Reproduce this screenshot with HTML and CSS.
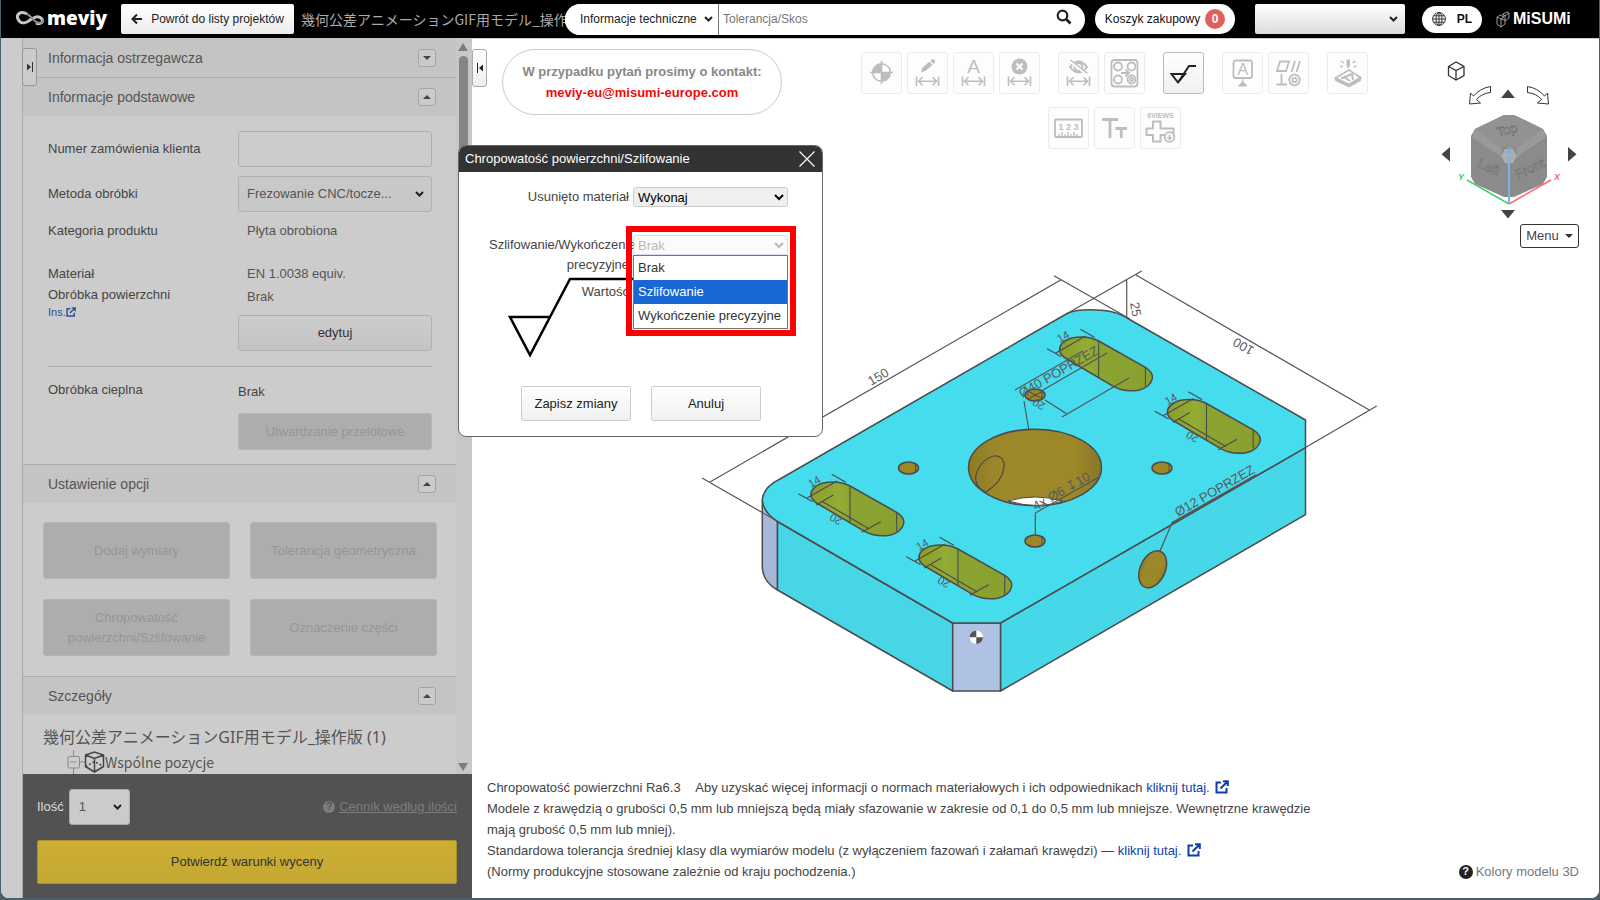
FILE: index.html
```html
<!DOCTYPE html>
<html lang="pl">
<head>
<meta charset="utf-8">
<title>meviy</title>
<link rel="stylesheet" href="styles.css">
</head>
<body>
<svg class="defs" aria-hidden="true">
  <defs>
    <symbol id="i-ext" viewBox="0 0 14 14"><path d="M6 2.5H1.5V12.500H11.500V8M8 1.200H12.800V6M12.300 1.700L5.500 8.500" fill="none" stroke="currentColor" stroke-width="2"/></symbol>
    <symbol id="i-dim" viewBox="0 0 41 42"><path d="M9.500 24.500v9.500M31.500 24.500v9.500M11 29.200h19M15.500 25.200l-4 4 4 4M25.500 25.200l4 4-4 4" fill="none" stroke="currentColor" stroke-width="1.600"/></symbol>
    <linearGradient id="g-slot" x1="0" x2="1"><stop offset="0" stop-color="#8a9f2c"/><stop offset=".3" stop-color="#92ac35"/><stop offset=".44" stop-color="#8aa432"/><stop offset=".45" stop-color="#8aa331"/><stop offset="1" stop-color="#87a02f"/></linearGradient>
    <linearGradient id="g-bore" x1="0" x2="1"><stop offset="0" stop-color="#8d7a25"/><stop offset=".2" stop-color="#9c8828"/><stop offset=".8" stop-color="#9c8828"/><stop offset="1" stop-color="#87762a"/></linearGradient>
  </defs>
</svg>
<div class="window">
  <header class="topbar">
    <a class="brand" href="#" aria-label="meviy">
      <svg viewBox="0 0 30 18" width="30" height="18"><path d="M11 4C4 0 0 5 2 9c2 5 8 5 12 1 4-3 9-5 12-1 2 3-2 6-6 4" fill="none" stroke="#c9c5cc" stroke-width="3"/><path d="M11 4c4 2 5 5 9 8 4 2 8 0 7-3" fill="none" stroke="#8f8b93" stroke-width="2"/></svg>
      <span>meviy</span>
    </a>
    <button class="back"><svg viewBox="0 0 12 12" width="12" height="12"><path d="M11 6H2M6 1.500L1.500 6 6 10.500" fill="none" stroke="#222" stroke-width="2"/></svg>Powrót do listy projektów</button>
    <span class="project">幾何公差アニメーションGIF用モデル_操作版</span>
    <form class="search">
      <select class="pick" aria-label="Zakres"><option>Informacje techniczne</option></select>
      <input type="text" placeholder="Tolerancja/Skos" aria-label="Szukaj">
      <button type="button" aria-label="Szukaj"><svg viewBox="0 0 16 16" width="16" height="16"><circle cx="6.500" cy="6.500" r="4.800" fill="none" stroke="#222" stroke-width="2.200"/><path d="M10 10l4.500 4.500" stroke="#222" stroke-width="2.800"/></svg></button>
    </form>
    <button class="cart">Koszyk zakupowy <b>0</b></button>
    <select class="account pick" aria-label="Konto"><option></option></select>
    <button class="lang"><svg viewBox="0 0 14 14" width="14" height="14"><g fill="none" stroke="#333"><circle cx="7" cy="7" r="6.400"/><ellipse cx="7" cy="7" rx="3" ry="6.400"/><path d="M7 .6v12.800M.6 7h12.800M1.500 3.800h11M1.500 10.200h11"/></g></svg>PL</button>
    <a class="misumi" href="#" aria-label="MISUMI"><svg viewBox="0 0 14 17" width="14" height="17"><path d="M1 6l4 2v8L1 13zM5 8l3-2M5 16l4-3V9L5 8M1 6l3-2 4 2M7 3l4-2 2 1-4 3zM9 5v5l4-3V2M7 3v3" fill="none" stroke="#aaa" stroke-width=".9"/></svg><span>MiSUMi</span></a>
  </header>

  <main class="main">
    <div class="gutter"></div>
    <aside class="sidebar">
      <button class="tab tab-left" aria-label="Rozwiń"><svg viewBox="0 0 8 10" width="8" height="10"><path d="M1 1.500v7L5 5z" fill="#333"/><path d="M6.500 0v10" stroke="#333"/></svg></button>
      <div class="scroll">
        <div class="panel">
          <h2 class="sec">Informacja ostrzegawcza<button class="toggle" aria-label="Rozwiń"><svg viewBox="0 0 8 4" width="8" height="4"><path d="M0 0h8L4 4z"/></svg></button></h2>
          <h2 class="sec">Informacje podstawowe<button class="toggle" aria-label="Zwiń"><svg viewBox="0 0 8 4" width="8" height="4"><path d="M0 4h8L4 0z"/></svg></button></h2>
          <div class="info">
            <div class="row tall"><label for="order">Numer zamówienia klienta</label><input id="order" class="box" type="text"></div>
            <div class="row tall"><label for="method">Metoda obróbki</label><select id="method" class="box pick"><option>Frezowanie CNC/tocze...</option></select></div>
            <div class="row"><span>Kategoria produktu</span><span class="val">Płyta obrobiona</span></div>
            <div class="row material"><span>Materiał</span><span class="val">EN 1.0038 equiv.</span></div>
            <div class="row">
              <div>Obróbka powierzchni<a class="ins" href="#">Ins.<svg width="10" height="10"><use href="#i-ext"/></svg></a></div>
              <div class="stack"><span class="val">Brak</span><button class="box edit">edytuj</button></div>
            </div>
            <hr>
            <div class="row">
              <span>Obróbka cieplna</span>
              <div class="stack heat"><span>Brak</span><button class="off">Utwardzanie przelotowe</button></div>
            </div>
          </div>
          <h2 class="sec">Ustawienie opcji<button class="toggle" aria-label="Zwiń"><svg viewBox="0 0 8 4" width="8" height="4"><path d="M0 4h8L4 0z"/></svg></button></h2>
          <div class="options">
            <button class="off">Dodaj wymiary</button>
            <button class="off">Tolerancja geometryczna</button>
            <button class="off">Chropowatość powierzchni/Szlifowanie</button>
            <button class="off">Oznaczenie części</button>
          </div>
          <h2 class="sec">Szczegóły<button class="toggle" aria-label="Zwiń"><svg viewBox="0 0 8 4" width="8" height="4"><path d="M0 4h8L4 0z"/></svg></button></h2>
          <div class="details">
            <p class="model-name">幾何公差アニメーションGIF用モデル_操作版 (1)</p>
            <p class="tree"><svg viewBox="0 0 38 24" width="38" height="24"><g fill="none" stroke="#8a8a8a"><path d="M6.500 0v6M6.500 18v6M12.500 12h6"/><rect x="1" y="6.500" width="11.500" height="11.500" rx="1.500"/><path d="M3.500 12h6"/></g><g fill="none" stroke="#444" stroke-width="1.500"><path d="M18.500 5L27.500 2 36.500 5v11.500L27.500 22 18.500 16.500zM18.500 5l9 3.500 9-3.500M27.500 8.500V22"/><path d="M18.500 16.500l9-5 9 5" stroke-dasharray="2 2"/></g></svg>Wspólne pozycje</p>
          </div>
        </div>
        <div class="scrollbar" aria-hidden="true"><svg viewBox="0 0 10 8" width="10" height="8"><path d="M0 8L5 0l5 8z" fill="#7d7d7d"/></svg><i></i><svg viewBox="0 0 10 8" width="10" height="8"><path d="M0 0h10L5 8z" fill="#7d7d7d"/></svg></div>
      </div>
      <div class="quote">
        <div class="qty"><label for="qty">Ilość</label><select id="qty" class="pick"><option>1</option></select>
          <a href="#"><span class="q">?</span><u>Cennik według ilości</u></a></div>
        <button class="confirm">Potwierdź warunki wyceny</button>
      </div>
    </aside>

    <section class="viewer">
      <div class="viewer-top">
        <button class="tab" aria-label="Zwiń"><svg viewBox="0 0 8 10" width="8" height="10"><path d="M7 1.500v7L3 5z" fill="#222"/><path d="M1.500 0v10" stroke="#222"/></svg></button>
        <p class="contact">W przypadku pytań prosimy o kontakt:<a href="#">meviy-eu@misumi-europe.com</a></p>
        <div class="tools">
          <div class="tool-row">
            <button aria-label="Punkt odniesienia"><svg viewBox="0 0 41 42"><circle cx="20.500" cy="20.500" r="8.800" fill="none" stroke="currentColor" stroke-width="1.600"/><path d="M20.500 20.500v-9a9 9 0 0 0-9 9zM20.500 20.500v9a9 9 0 0 0 9-9z" fill="currentColor"/><path d="M20.500 9v23M9 20.500h23" stroke="currentColor" stroke-width="1.600"/></svg></button>
            <button aria-label="Edytuj wymiar"><svg viewBox="0 0 41 42"><use href="#i-dim"/><path d="M14 20.500l1.300-4.700 7.200-6.300 3 3.400-7.200 6.200zM23.500 8.700l1.500-1.400q1.200-.6 2.200.4l.8 1q.7 1-.3 1.900l-1.400 1.300z" fill="currentColor"/></svg></button>
            <button aria-label="Tekst wymiaru"><svg viewBox="0 0 41 42"><use href="#i-dim"/><text x="20.500" y="20.500" class="ic" font-size="19">A</text></svg></button>
            <button aria-label="Usuń wymiar"><svg viewBox="0 0 41 42"><use href="#i-dim"/><circle cx="20.500" cy="14.500" r="8" fill="currentColor"/><path d="M17.500 11.500l6 6M23.500 11.500l-6 6" stroke="#fff" stroke-width="2"/></svg></button>
            <button class="gap" aria-label="Ukryj wymiar"><svg viewBox="0 0 41 42"><use href="#i-dim"/><path d="M12 15q8.500-11 17 0-8.500 11-17 0z" fill="none" stroke="currentColor" stroke-width="2"/><circle cx="20.500" cy="15" r="4" fill="none" stroke="currentColor" stroke-width="2"/><path d="M11.500 8.500l17.500 13.500" stroke="#fff" stroke-width="3"/><path d="M12.500 8l17 13.500" stroke="currentColor" stroke-width="1.500"/></svg></button>
            <button aria-label="Grupa otworów"><svg viewBox="0 0 41 42"><g fill="none" stroke="currentColor" stroke-width="1.800"><rect x="7.500" y="8" width="26" height="26.500" rx="3"/><circle cx="14" cy="14.500" r="4"/><circle cx="27.500" cy="14.500" r="4"/><circle cx="14" cy="27.500" r="4"/><circle cx="27.500" cy="27.500" r="4"/><circle cx="27.500" cy="27.500" r="1.500"/><path d="M17 21h7M21.500 17.500l3.500 3.500-3.500 3.500"/></g></svg></button>
            <button class="gap on" aria-label="Chropowatość"><svg viewBox="0 0 41 42"><path d="M8.500 22h13.500L15 30.500zM15 30.500L26 14h7" fill="none" stroke="currentColor" stroke-width="2"/></svg></button>
            <button class="gap" aria-label="Oznaczenie"><svg viewBox="0 0 41 42"><rect x="11.500" y="8.500" width="18.500" height="17.500" rx="2" fill="none" stroke="currentColor" stroke-width="1.800"/><text x="20.750" y="23" class="ic" font-size="16">A</text><path d="M20.750 26v5M16.500 34h8.500l-4.200-4.500z" stroke="currentColor" fill="currentColor"/></svg></button>
            <button aria-label="Tolerancja"><svg viewBox="0 0 41 42"><g fill="none" stroke="currentColor" stroke-width="1.800"><path d="M12 9.500h9l-3 9.500H9zM27 9l-3.500 11M32 9l-3.500 11M13.500 22v10.500M8.500 32.500h10.500"/><circle cx="26.500" cy="28" r="5.300"/><circle cx="26.500" cy="28" r="2.200"/></g></svg></button>
            <button class="gap" aria-label="Grawerowanie"><svg viewBox="0 0 41 42"><path d="M8.500 26L22 18l11.500 7.500L22 32.500z" fill="none" stroke="currentColor" stroke-width="1.600"/><path d="M8.500 26v2.500l13.500 6.500 11.500-6.500V25.500L22 32.500z" fill="currentColor" stroke="currentColor"/><path d="M14 26.500l11-4.500 1 6M17 25l6 4" fill="none" stroke="currentColor" stroke-width="2"/><path d="M19.500 7.500h3.500v6l-1.750 3-1.750-3z" fill="currentColor"/><path d="M14 9l3 2M13 14.500h3M28.500 9l-3 2M29.500 14.500h-3" stroke="currentColor" stroke-width="1.500"/></svg></button>
          </div>
          <div class="tool-row">
            <button aria-label="Linijka"><svg viewBox="0 0 41 42"><rect x="7" y="12.500" width="27" height="17.500" rx="1" fill="none" stroke="currentColor" stroke-width="1.800"/><text x="20.500" y="23" class="ic" font-size="9" font-weight="700">1 2 3</text><path d="M11 30v-3M14 30v-5M17 30v-3M20 30v-5M23 30v-3M26 30v-5M29 30v-3" stroke="currentColor" stroke-width="1.400"/></svg></button>
            <button aria-label="Rozmiar tekstu"><svg viewBox="0 0 41 42"><path d="M8 12.500h16M16 12.500V31M21.500 21.500h11.500M27.250 21.500V31" fill="none" stroke="currentColor" stroke-width="2.800"/></svg></button>
            <button aria-label="6 widoków"><svg viewBox="0 0 41 42"><text x="20.500" y="10.500" class="ic" font-size="7" font-weight="700">6VIEWS</text><path d="M13 14.500h7.500v7h13v6.500h-13v6.500H13V28H6.500v-6.500H13z" fill="none" stroke="currentColor" stroke-width="2" stroke-linejoin="round"/><circle cx="29.500" cy="30" r="4.800" fill="#fff" stroke="currentColor" stroke-width="1.800"/><path d="M29.500 27.500v5M27.300 30.300l2.200 2.200 2.200-2.200" fill="none" stroke="currentColor" stroke-width="1.500"/></svg></button>
          </div>
        </div>
        <div class="nav">
          <svg viewBox="1438 58 140 162" width="140" height="162">
            <path d="M1447.500 66.500L1455 62l8 4.500v9l-8 4.500-7.500-4.500zM1447.500 66.500l7.500 4 8-4M1455 70.500V80" fill="none" stroke="#333" stroke-width="1.300"/>
            <path d="M1489.500 86.500v6q-9 1-14 7l4 3.500-11 1 1-11 3 3q7-8 17-9.500zM1526.500 86.500v6q9 1 14 7l-4 3.500 11 1-1-11-3 3q-7-8-17-9.500z" fill="none" stroke="#333"/>
            <path d="M1500 98h14l-7-8.500zM1500 210h14l-7 8.500zM1449 147v14.500l-8.500-7.250zM1567 147v14.500l8.500-7.250z" fill="#444"/>
            <path d="M1503 115h10l29 14 4 7v41l-4 7-29 13h-10l-29-13-4-7v-41l4-7z" fill="#8b8b8b"/>
            <path d="M1503 115h10l29 14-26 19q-8-4-16 0l-26-19z" fill="#929292"/><path d="M1474 129l-3 8 29 20v-9zM1542 129l3 8-29 20v-9z" fill="#9a9a9a"/>
            <path d="M1500 156l4-7h8l4 7-4 7h-8z" fill="#adadad"/>
            <g class="cube-text"><text x="1497" y="137" transform="rotate(-15 1497 137)">Top</text><text x="1476" y="167" transform="rotate(22 1476 167)">Left</text><text x="1517" y="179" transform="rotate(-25 1517 179)">Front</text></g>
            <path d="M1508 204L1466 180" stroke="#45d06f" stroke-width="1.500"/><path d="M1508 204L1550 180" stroke="#fb6d6d" stroke-width="1.500"/><path d="M1508 204v-48" stroke="#7ab2ee" stroke-width="2"/>
            <g class="axis"><text x="1460" y="180" fill="#35c860">Y</text><text x="1556" y="180" fill="#f66">X</text><text x="1508" y="153" fill="#6db1f5">Z</text></g>
          </svg>
          <button class="menu">Menu<svg viewBox="0 0 8 4" width="8" height="4"><path d="M0 0h8L4 4z" fill="#333"/></svg></button>
        </div>
      </div>

      <svg class="model" viewBox="700 262 690 434" role="img" aria-label="Model 3D">
        <g stroke="#4b4b4b" stroke-width="1.500" stroke-linejoin="round">
          <path d="M762.300 500v68q1 14 15.200 22v-69z" fill="#a7b7da"/>
          <path d="M777.500 521.500L952.700 623v68L777.500 590z" fill="#46d6e6"/>
          <path d="M1000.500 623l305-175.300v67L1000.500 691z" fill="#46d8e8"/>
          <path d="M952.700 623h47.800v68h-47.800z" fill="#afc2e4"/>
          <path d="M780 479L1068 313q12-5 36-2.500 14 1.500 23 7.500l178.500 102v27.700L1000.500 623h-47.800L777.500 521.500Q763 512 762.300 500q1-13 17.700-21z" fill="#45dcee"/>
          <ellipse cx="1035" cy="467.500" rx="66.500" ry="38.300" fill="url(#g-bore)"/>
          <path d="M1008 501q27-8 55 0-25 9-55 0z" fill="#fff" stroke-width="1"/>
          <path d="M986 492c-19-7-9-32 8-36 15-1 14 22-8 36z" fill="none" stroke-width="1.200"/>
          <g id="hole"><ellipse cx="908.500" cy="468" rx="10" ry="6" fill="#9c8828"/><path d="M915.500 464v8" stroke-width="1"/></g>
          <use href="#hole" x="253.500"/><use href="#hole" x="126.500" y="73"/><use href="#hole" x="126.500" y="-73"/>
          <path d="M1028 391l15 8M1043 391l-15 8" stroke-width="1"/>
          <ellipse cx="1152.700" cy="569.300" rx="12.500" ry="19.500" transform="rotate(24 1152.700 569.300)" fill="url(#g-bore)"/>
        </g>
        <g id="slot">
          <path d="M811 496q-1-9 12-13 16-3 27 3l46.700 26.300q8 5 7 11-2 9-14 12-14 2-24.700-3.600L818.300 504q-6-3-7.300-8z" fill="url(#g-slot)" stroke="#4b4b4b" stroke-width="1.500"/>
          <path d="M850 486v37M896.700 512.300V531M831.700 474.300l14 8M798.300 493.700l14 7.800M806.700 498.300L837 481" fill="none" stroke="#4b4b4b" stroke-width="1.100"/>
          <text class="dim small" x="811" y="488" transform="rotate(-30 811 488)">14</text>
        </g>
        <use href="#slot" x="108" y="63"/><use href="#slot" x="248.700" y="-145"/><use href="#slot" x="356.500" y="-82.500"/>
        <g id="length">
          <path d="M833.300 495l-17 10M880.700 521.700l-19 10.600M822.700 501.700l46.700 27.300" fill="none" stroke="#4b4b4b" stroke-width="1.100"/>
          <text class="dim small" x="843" y="519" transform="rotate(210 843 519)">20</text>
        </g>
        <use href="#length" x="108" y="63"/><use href="#length" x="356.500" y="-82.500"/>
        <g fill="none" stroke="#555" stroke-width="1.200">
          <path d="M710 482L1060.700 280M702 478l75 43M1054 275.700l76 43.300M1141.700 271L1068 313M1126.700 280v38M1136 275l233.300 135M1376.700 406L1305 447.700"/>
          <path d="M1160 551l11.700-27.500M1015 390l68-39M1043 390l64-37M1024 401l4.700 28M1045 400l22 14M1062 417l67-39M1035.300 535v-22l64-36"/>
          <path d="M1171.700 523.300l85-48.300" stroke-width="2.200"/>
        </g>
        <text class="dim" x="871" y="386" transform="rotate(-30 871 386)">150</text>
        <text class="dim" x="1255" y="348" transform="rotate(210 1255 348)">100</text>
        <text class="dim" x="1130" y="303" transform="rotate(80 1130 303)">25</text>
        <text class="dim" x="1022" y="398" transform="rotate(-30 1022 398)">Ø40 POPRZEZ</text>
        <text class="dim" x="1178" y="517" transform="rotate(-30 1178 517)">Ø12 POPRZEZ</text>
        <text class="dim small" x="1046" y="404" transform="rotate(210 1046 404)">20</text>
        <text class="dim" x="1036" y="511" transform="rotate(-30 1036 511)">4x Ø6 ↧10</text>
        <circle cx="976.300" cy="637.300" r="6.700" fill="#fff"/><path d="M976.300 637.300v-6.700a6.700 6.700 0 0 0-6.700 6.700zM976.300 637.300v6.700a6.700 6.700 0 0 0 6.700-6.700z" fill="#555"/>
      </svg>

      <div class="notes">
        <p>Chropowatość powierzchni Ra6.3 <span class="aby">Aby uzyskać więcej informacji o normach materiałowych i ich odpowiednikach <a href="#">kliknij tutaj. <svg width="14" height="14"><use href="#i-ext"/></svg></a></span></p>
        <p>Modele z krawędzią o grubości 0,5 mm lub mniejszą będą miały sfazowanie w zakresie od 0,1 do 0,5 mm lub mniejsze. Wewnętrzne krawędzie mają grubość 0,5 mm lub mniej).</p>
        <p>Standardowa tolerancja średniej klasy dla wymiarów modelu (z wyłączeniem fazowań i załamań krawędzi) — <a href="#">kliknij tutaj. <svg width="14" height="14"><use href="#i-ext"/></svg></a></p>
        <div class="last"><p>(Normy produkcyjne stosowane zależnie od kraju pochodzenia.)</p><a class="colors" href="#"><span class="q">?</span>Kolory modelu 3D</a></div>
      </div>
    </section>
  </main>

  <div class="dialog" role="dialog" aria-label="Chropowatość powierzchni/Szlifowanie">
    <div class="dialog-head">Chropowatość powierzchni/Szlifowanie<button aria-label="Zamknij"><svg viewBox="0 0 16 16" width="16" height="16"><path d="M.5.500l15 15M15.500.500l-15 15" stroke="#fff" stroke-width="1.200"/></svg></button></div>
    <div class="dialog-body">
      <div class="field"><label for="removal">Usunięto materiał</label><select id="removal"><option>Wykonaj</option></select></div>
      <div class="field second"><label for="finish">Szlifowanie/Wykończenie precyzyjne</label>
        <div class="marked"><select id="finish" disabled><option>Brak</option></select>
          <ul class="list" role="listbox"><li role="option">Brak</li><li role="option" class="sel" aria-selected="true">Szlifowanie</li><li role="option">Wykończenie precyzyjne</li></ul></div>
      </div>
      <div class="field third"><span>Wartość</span></div>
      <svg class="symbol" viewBox="0 0 130 82" width="130" height="82"><path d="M2 40h40L22 78zM22 78L62 2h66" fill="none" stroke="#000" stroke-width="2.500"/></svg>
      <div class="actions"><button>Zapisz zmiany</button><button>Anuluj</button></div>
    </div>
  </div>
</div>
</body>
</html>
```

FILE: styles.css
```css
* { box-sizing: border-box; }
body { margin: 0; background: #4a5f6a; font: 13px/20px "Liberation Sans", Arial, "Noto Sans CJK JP", sans-serif; color: #444; }
button, input, select { font: inherit; color: inherit; margin: 0; }
button { padding: 0; display: flex; align-items: center; justify-content: center; }
a { color: #0b3fae; text-decoration: none; }
p, h2, ul { margin: 0; padding: 0; }
.defs { position: absolute; width: 0; height: 0; }
.window { position: relative; height: calc(100vh - 2px); min-height: 760px; margin: 0 1px; display: flex; flex-direction: column; overflow: hidden; background: #fff; border-radius: 0 0 8px 8px; }

.topbar { flex: none; height: 38px; background: #000; display: flex; align-items: center; padding: 0 29px 0 15px; font-size: 12px; }
.brand { display: flex; align-items: center; width: 105px; color: #fff; font: 800 19px/24px "Open Sans", sans-serif; gap: 1px; }
.brand span { padding-bottom: 3px; }
.back { width: 173px; height: 30px; gap: 8px; border: 0; border-radius: 2px; background: linear-gradient(#fff, #ececec); color: #222; white-space: nowrap; }
.project { width: 276px; margin-left: 7px; overflow: hidden; white-space: nowrap; font-size: 14px; color: #aaa; font-family: "Noto Sans CJK JP", sans-serif; }
.search { flex: 1; position: relative; margin-left: -12px; height: 31px; display: flex; background: #fff; border-radius: 16px; overflow: hidden; min-width: 300px; }
.search select { width: 154px; border: 0; border-right: 1px solid #777; background-color: #fff; background-position: right 5px center; padding: 0 2px 0 15px; color: #222; }
.search input { flex: 1; border: 0; padding: 0 4px; background: none; outline: none; }
.search input::placeholder { color: #757575; }
.search button { width: 42px; height: 27px; border: 0; background: none; }
.cart { width: 140px; height: 30px; margin-left: 10px; gap: 5px; border: 0; border-radius: 15px; background: #fff; color: #111; }
.cart b { width: 20px; height: 20px; border-radius: 10px; background: #e06060; color: #fff; }
.account { width: 150px; height: 30px; margin-left: 20px; border: 0; border-radius: 2px; background-color: #eee; }
.lang { width: 60px; height: 27px; margin-left: 17px; gap: 11px; border: 0; border-radius: 14px; background: #fff; color: #111; font-weight: 700; }
.misumi { display: flex; align-items: center; gap: 3px; margin-left: 14px; width: 74px; color: #fff; font: 700 16px/20px "Liberation Sans", Arial, sans-serif; white-space: nowrap; }
.misumi svg { flex: none; }
.pick { appearance: none; background-repeat: no-repeat; background-position: right 7px center; background-image: url("data:image/svg+xml,%3Csvg xmlns='http://www.w3.org/2000/svg' width='9' height='6'%3E%3Cpath d='M1 1l3.500 3.500L8 1' fill='none' stroke='%23222' stroke-width='2'/%3E%3C/svg%3E"); }
.pick.account { background-image: url("data:image/svg+xml,%3Csvg xmlns='http://www.w3.org/2000/svg' width='9' height='6'%3E%3Cpath d='M1 1l3.500 3.500L8 1' fill='none' stroke='%23222' stroke-width='2'/%3E%3C/svg%3E"), linear-gradient(#fff, #dcdcdc); background-position: right 7px center, 0 0; }

.main { flex: 1; min-height: 0; display: flex; }
.gutter { flex: none; width: 21px; background: #ccc; }
.sidebar { position: relative; flex: none; width: 450px; display: flex; flex-direction: column; border-left: 1px solid #aaa; background: #ccc; }
.tab { width: 15px; height: 38px; border: 1px solid #aaa; border-radius: 3px; background: linear-gradient(#fff, #eee); }
.tab-left { position: absolute; left: -1px; top: 10px; background: #cbcbcb; border-color: #999; }
.scroll { flex: 1; min-height: 0; display: flex; overflow: hidden; }
.panel { flex: 1; overflow: hidden; }
.scrollbar { width: 16px; display: flex; flex-direction: column; align-items: center; padding: 5px 2px 3px 0; background: #c8c8c8; }
.scrollbar i { width: 9px; height: 220px; margin: 5px 0 auto; border-radius: 5px; background: #858585; }
.sec { display: flex; justify-content: space-between; align-items: center; height: 39px; padding: 0 20px 0 25px; border-top: 1px solid #adadad; background: #c4c4c4; font-size: 14px; font-weight: 400; color: #555; }
.sec:first-child { border-top: 0; }
.toggle { width: 18px; height: 18px; border: 1px solid #a5a5a5; border-radius: 3px; background: #cacaca; }
.toggle svg { fill: #444; }
.info { padding: 15px 24px 14px 25px; }
.row { display: grid; grid-template-columns: 190px 1fr; align-items: start; }
.tall { align-items: center; margin-bottom: 9px; }
.val { padding-left: 9px; color: #555; }
.material { margin: 23px 0 1px; }
.box { width: 100%; height: 36px; border: 1px solid #b0b0b0; border-radius: 3px; background-color: #ccc; }
select.box { padding: 0 24px 0 8px; background-color: #c8c8c8; color: #555; }
.stack { display: flex; flex-direction: column; gap: 8px; padding-top: 2px; }
.edit { color: #333; background: linear-gradient(#cdcdcd, #c3c3c3); }
.ins { display: flex; align-items: center; font-size: 11px; line-height: 14px; color: #2d4f9b; }
.info hr { margin: 15px 0 13px; border: 0; border-top: 1px solid #aaa; }
.off { border: 1px solid #b4b4b4; border-radius: 3px; background: #adadad; color: #969696; padding: 0 10px; }
.heat { gap: 11px; }
.heat .off { height: 37px; }
.options { display: grid; grid-template-columns: 1fr 1fr; gap: 20px; padding: 19px 19px 20px 20px; }
.options .off { height: 57px; }
.details { padding: 9px 0 0 20px; font-family: "Noto Sans CJK JP", "Noto Sans", sans-serif; color: #555; }
.model-name { font-family: "Noto Sans", "Noto Sans CJK JP", sans-serif; font-size: 16px; line-height: 26px; white-space: nowrap; }
.tree { display: flex; align-items: center; padding-left: 24px; font-size: 14px; line-height: 24px; }
.quote { flex: none; padding: 15px 15px 14px 14px; background: #525252; color: #ddd; }
.qty { display: flex; align-items: center; margin-bottom: 15px; }
.qty select { width: 61px; height: 36px; margin-left: 5px; padding: 0 9px; border: 1px solid #aaa; border-radius: 3px; background-color: #cbcbcb; color: #555; }
.qty a { margin-left: auto; display: flex; align-items: center; gap: 4px; color: #7d7d7d; }
.q { display: flex; align-items: center; justify-content: center; width: 14px; height: 14px; border-radius: 7px; background: #222; color: #fff; font-size: 11px; font-weight: 700; }
.qty .q { width: 12px; height: 12px; background: #7d7d7d; color: #525252; font-size: 10px; }
.confirm { width: 100%; height: 44px; border: 1px solid #a8922e; border-radius: 2px; background: linear-gradient(#ccae33, #c5a833); color: #333; }

.viewer { flex: 1; min-width: 0; display: flex; flex-direction: column; background: #fff; border-top: 1px solid #ccc; }
.viewer-top { display: flex; align-items: flex-start; padding: 10px 20px 0 0; }
.contact { flex: none; width: 280px; height: 66px; margin-left: 15px; padding-top: 11px; border: 1px solid #ccc; border-radius: 33px; text-align: center; font-weight: 700; line-height: 21px; color: #888; white-space: nowrap; }
.contact a { display: block; color: #ee0a0a; }
.tools { flex: 1; display: flex; flex-direction: column; align-items: center; gap: 13px; padding: 3px 0 0 8px; }
.tool-row { display: flex; gap: 5px; }
.tool-row button { width: 41px; height: 42px; border: 1px solid #ebebeb; border-radius: 3px; background: #fdfdfd; color: #bdbdbd; }
.tool-row svg { width: 41px; height: 42px; flex: none; }
.tool-row .gap { margin-left: 13px; }
.tool-row .on { color: #222; border-color: #bbb; background: linear-gradient(#fff, #f0f0f0); }
.ic { fill: currentColor; font-family: "Liberation Sans", sans-serif; text-anchor: middle; }
.nav { flex: none; display: flex; flex-direction: column; align-items: flex-end; gap: 4px; padding-top: 9px; }
.menu { width: 59px; height: 24px; gap: 6px; border: 1px solid #333; border-radius: 3px; background: #fff; }
.cube-text { fill: #a0a0a0; stroke: #666; stroke-width: 0.5px; font: 13px "Liberation Sans", sans-serif; }
.axis { font: italic 700 9px "Liberation Sans", sans-serif; text-anchor: middle; }
.model { width: 690px; max-width: 100%; height: 434px; margin: 14px 0 0 228px; }
.dim { font: 13px "Liberation Sans", sans-serif; fill: #5a5a5a; }
.small { font-size: 11px; }
.notes { margin-top: auto; padding: 0 20px 16px 15px; line-height: 21px; }
.notes > p { max-width: 840px; }
.notes svg { vertical-align: -2px; margin-left: 2px; }
.aby { margin-left: 11px; }
.last { display: flex; justify-content: space-between; }
.colors { display: flex; align-items: center; gap: 3px; color: #777; }

.dialog { position: absolute; left: 457px; top: 145px; width: 365px; background: #fff; border: 1px solid #666; border-radius: 8px; overflow: hidden; }
.dialog-head { display: flex; justify-content: space-between; align-items: center; height: 26px; padding: 0 7px 0 6px; background: #333; color: #fff; }
.dialog-head button { border: 0; background: none; }
.dialog-body { position: relative; padding: 15px 0 15px 30px; }
.field { display: grid; grid-template-columns: 140px 155px; gap: 4px; text-align: right; align-items: start; }
.field select { width: 155px; height: 20px; border: 1px solid #ccc; border-radius: 3px; background: #efefef; color: #000; padding: 0; }
.second { margin-top: 28px; }
.third { margin-top: 7px; }
.marked { position: relative; text-align: left; z-index: 2; }
.marked::after { content: ""; position: absolute; inset: -9px -8px -81px -7px; border: 6px solid #f00; }
.marked select { display: block; background: #fafafa; border-color: #c9cdf0; color: #999; }
.list { position: absolute; left: 0; right: 0; top: 20px; border: 1px solid #777; background: #fff; list-style: none; color: #333; white-space: nowrap; }
.list li { height: 24px; padding-left: 4px; line-height: 24px; }
.list .sel { background: #1967d2; color: #fff; }
.symbol { position: absolute; left: 49px; top: 105px; z-index: 1; }
.actions { display: flex; gap: 20px; padding: 84px 0 0 32px; }
.actions button { width: 110px; height: 35px; border: 1px solid #ccc; border-radius: 2px; background: linear-gradient(#fff, #f0f0f0); color: #222; }
```
